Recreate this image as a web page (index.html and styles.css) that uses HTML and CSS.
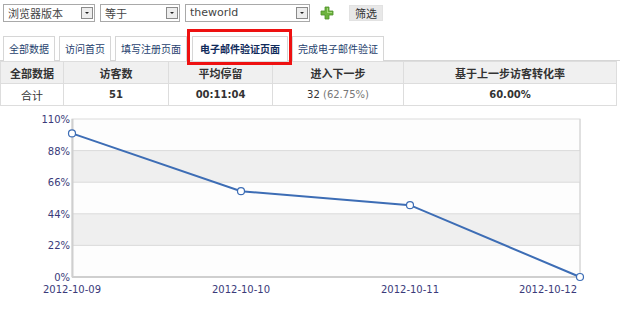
FILE: index.html
```html
<!DOCTYPE html>
<html lang="zh-CN">
<head>
  <meta charset="UTF-8" />
  <title>转化漏斗</title>
  <link rel="stylesheet" href="styles.css">
</head>
<body>
  <div class="filters">
    <div class="sel sel-a"><span>浏览器版本</span><i class="arrow"></i></div>
    <div class="sel sel-b"><span>等于</span><i class="arrow"></i></div>
    <div class="sel sel-c"><span class="latin">theworld</span><i class="arrow"></i></div>
    <svg class="plus" width="14" height="14" viewBox="0 0 14 14">
      <path d="M5 1h4v4h4v4H9v4H5V9H1V5h4z" fill="#6db33f" stroke="#4e8f2a" stroke-width="0.8"/>
      <path d="M6 2h2v4h4v1H7V2z" fill="#a4d97a"/>
    </svg>
    <button class="btn">筛选</button>
  </div>

  <div class="tabs">
    <div class="tab">全部数据</div>
    <div class="tab">访问首页</div>
    <div class="tab">填写注册页面</div>
    <div class="tab active">电子邮件验证页面</div>
    <div class="tab">完成电子邮件验证</div>
  </div>

  <table class="stats">
    <tr>
      <th class="c1">全部数据</th>
      <th class="c2">访客数</th>
      <th class="c3">平均停留</th>
      <th class="c4">进入下一步</th>
      <th>基于上一步访客转化率</th>
    </tr>
    <tr>
      <td>合计</td>
      <td class="num">51</td>
      <td class="num">00:11:04</td>
      <td class="plain">32 <span class="pct">(62.75%)</span></td>
      <td class="num">60.00%</td>
    </tr>
  </table>

  <!-- 趋势图 -->
  <svg class="chart" width="620" height="203" viewBox="0 0 620 203">
    <rect x="72" y="8" width="508" height="158" fill="#fdfdfd" stroke="#dcdcdc"/>
    <rect x="72" y="39.6" width="508" height="31.6" fill="#efefef"/>
    <rect x="72" y="102.8" width="508" height="31.6" fill="#efefef"/>
    <g stroke="#dadada" stroke-width="1">
      <line x1="72" y1="39.6" x2="580" y2="39.6"/>
      <line x1="72" y1="71.2" x2="580" y2="71.2"/>
      <line x1="72" y1="102.8" x2="580" y2="102.8"/>
      <line x1="72" y1="134.4" x2="580" y2="134.4"/>
    </g>
    <line x1="72.5" y1="8" x2="72.5" y2="166" stroke="#cfcfcf" stroke-width="2"/>
    <line x1="72" y1="166" x2="580" y2="166" stroke="#cfcfcf" stroke-width="2"/>
    <line x1="580" y1="8" x2="580" y2="166" stroke="#d4d4d4"/>
    <g class="ylab" text-anchor="end">
      <text x="70" y="12">110%</text>
      <text x="70" y="43.6">88%</text>
      <text x="70" y="75.2">66%</text>
      <text x="70" y="106.8">44%</text>
      <text x="70" y="138.4">22%</text>
      <text x="70" y="170">0%</text>
    </g>
    <g class="xlab">
      <text x="72" y="182" text-anchor="middle">2012-10-09</text>
      <text x="241" y="182" text-anchor="middle">2012-10-10</text>
      <text x="410" y="182" text-anchor="middle">2012-10-11</text>
      <text x="577" y="182" text-anchor="end">2012-10-12</text>
    </g>
    <polyline points="72,22.4 241,80.2 410,94.2 580,166" fill="none" stroke="#3d6db5" stroke-width="2"/>
    <g fill="#fff" stroke="#3d6db5" stroke-width="1.2">
      <circle cx="72" cy="22.4" r="3.5"/>
      <circle cx="241" cy="80.2" r="3.5"/>
      <circle cx="410" cy="94.2" r="3.5"/>
      <circle cx="580" cy="166" r="3.5"/>
    </g>
  </svg>
</body>
</html>
```

FILE: styles.css
```css
body {
  margin: 0;
  font-family: "Noto Sans CJK SC", "DejaVu Sans", sans-serif;
  font-size: 11px;
  color: #333;
  background: #fff;
}

.filters {
  display: flex;
  align-items: center;
  padding: 3px 0 0 3px;
  height: 19px;
}

.sel {
  display: flex;
  align-items: center;
  justify-content: space-between;
  box-sizing: border-box;
  height: 18px;
  border: 1px solid #a9a9a9;
  padding: 0 1px 0 4px;
  margin-right: 5px;
  color: #444;
}

.sel-a { width: 92px; }
.sel-b { width: 80px; }
.sel-c { width: 125px; }

.latin {
  font-family: "DejaVu Sans", sans-serif;
  font-size: 11px;
}

.arrow {
  width: 12px;
  height: 12px;
  box-sizing: border-box;
  border: 1px solid #8a8a8a;
  background: #ededed;
  position: relative;
}

.arrow::after {
  content: "";
  position: absolute;
  left: 3px;
  top: 4px;
  border-left: 2px solid transparent;
  border-right: 2px solid transparent;
  border-top: 2px solid #222;
}

.plus {
  margin: 0 15px 0 5px;
}

.btn {
  font-family: inherit;
  font-size: 11px;
  height: 16px;
  padding: 0 5px;
  border: 1px solid #e2e2e2;
  background: #e8e8e8;
  color: #333;
  line-height: 14px;
}

.tabs {
  display: flex;
  gap: 4px;
  padding: 14px 0 0 3px;
  height: 24px;
  border-bottom: 1px solid #d6d6d6;
  font-size: 10px;
}

.tab {
  box-sizing: border-box;
  height: 25px;
  padding: 0 5px;
  line-height: 23px;
  border: 1px solid #d6d6d6;
  border-bottom: none;
  background: #fff;
  color: #1f3f6e;
}

.tab.active {
  position: relative;
  font-weight: bold;
  color: #102a5a;
  padding: 0 7px;
  margin-left: 1px;
}

.tab.active::after {
  content: "";
  position: absolute;
  left: -6px;
  right: -5px;
  top: -8px;
  bottom: -4px;
  border: 3px solid #ee1111;
}

.stats {
  width: 617px;
  border-collapse: collapse;
}

.stats th,
.stats td {
  border: 1px solid #dddddd;
  text-align: center;
  height: 21px;
  padding: 0;
  color: #333;
}

.stats th {
  background: #f0f0f0;
  font-weight: bold;
}

.stats .c1 { width: 62px; }
.stats .c2 { width: 104px; }
.stats .c3 { width: 103px; }
.stats .c4 { width: 130px; }

.stats .num {
  font-weight: bold;
  font-family: "DejaVu Sans", sans-serif;
  font-size: 10px;
}

.stats .plain {
  font-family: "DejaVu Sans", sans-serif;
  font-size: 10px;
}

.pct {
  color: #777;
}

.chart {
  display: block;
  margin-top: 5px;
}

.chart text {
  font-family: "DejaVu Sans", sans-serif;
  font-size: 10px;
  fill: #3a3a7a;
}
```
